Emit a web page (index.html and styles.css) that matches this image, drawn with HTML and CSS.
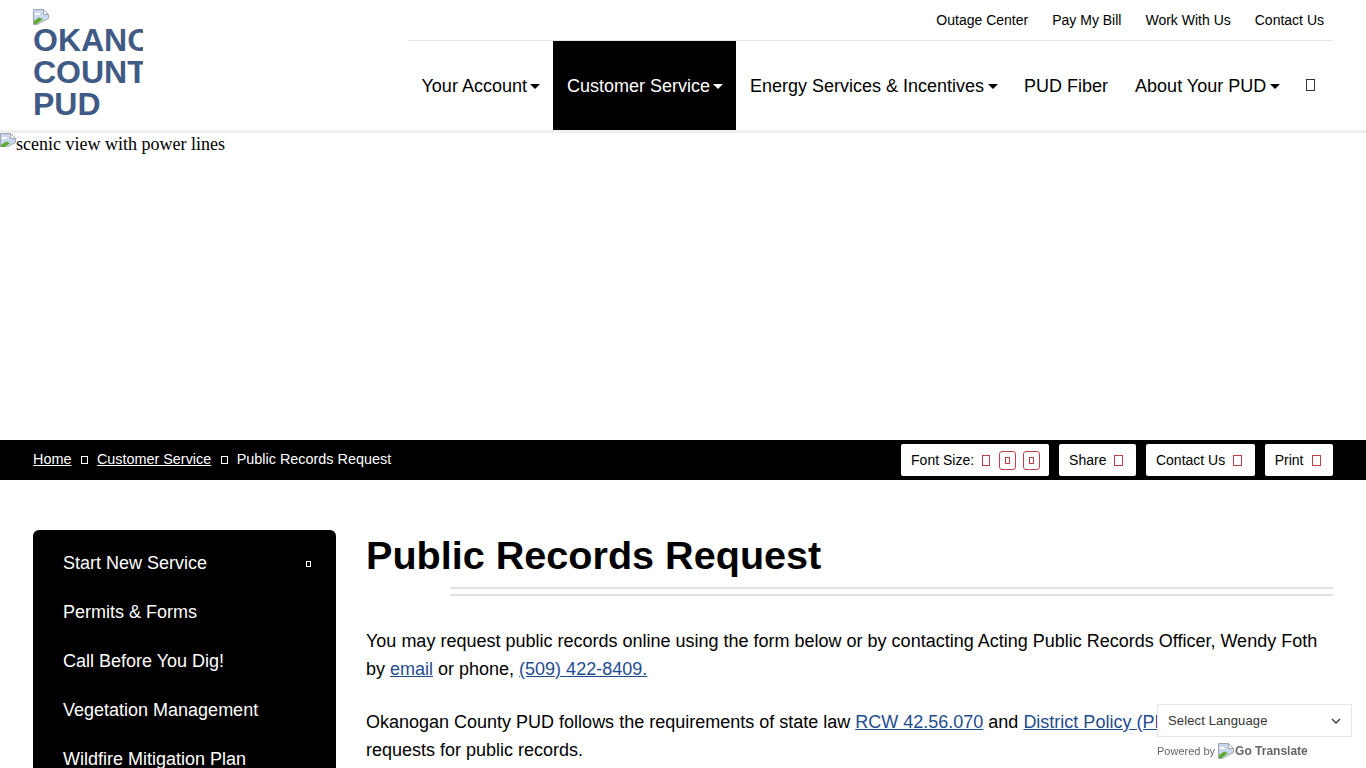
FILE: index.html
```html
<!DOCTYPE html>
<html lang="en">
<head>
<meta charset="utf-8">
<title>Public Records Request</title>
<link rel="stylesheet" href="styles.css">
</head>
<body>
<header class="site-header">
  <a class="logo" href="#">
    <svg class="broken" viewBox="0 0 16 16"><path d="M.5 15.500V.5h10l5 5v4L4 15.500z" fill="#c9d8ee" stroke="#a4a4ae"/><path d="M2 4h5v2H2z" fill="#fff"/><path d="M1 15v-3l5-3.500 4 1.500-6.500 5z" fill="#5fa82e"/><path d="M10.500.5v5h5z" fill="#fff" stroke="#a4a4ae"/></svg>
    <span class="logo-alt">OKANOGAN COUNTY PUD</span>
  </a>
  <div class="header-right">
    <nav class="top-links">
      <a href="#">Outage Center</a>
      <a href="#">Pay My Bill</a>
      <a href="#">Work With Us</a>
      <a href="#">Contact Us</a>
    </nav>
    <nav class="main-nav">
      <a href="#">Your Account<i class="caret"></i></a>
      <a href="#" class="active">Customer Service<i class="caret"></i></a>
      <a href="#">Energy Services &amp; Incentives<i class="caret"></i></a>
      <a href="#" class="plain">PUD Fiber</a>
      <a href="#">About Your PUD<i class="caret"></i></a>
      <a href="#" class="search"><i class="tofu tofu-dark"></i></a>
    </nav>
  </div>
</header>

<section class="hero">
  <svg class="broken broken-cut" viewBox="0 0 16 14"><path d="M.5 15.500V.5h10l5 5v4L4 15.500z" fill="#c9d8ee" stroke="#a4a4ae"/><path d="M2 4h5v2H2z" fill="#fff"/><path d="M1 15v-3l5-3.500 4 1.500-6.500 5z" fill="#5fa82e"/><path d="M10.500.5v5h5z" fill="#fff" stroke="#a4a4ae"/></svg><span>scenic view with power lines</span>
</section>

<div class="crumb-bar">
  <nav class="crumbs">
    <a href="#">Home</a><i class="tofu tofu-small"></i>
    <a href="#">Customer Service</a><i class="tofu tofu-small"></i>
    <span>Public Records Request</span>
  </nav>
  <div class="tools">
    <div class="chip chip-font">Font Size:
      <i class="tofu tofu-red first"></i>
      <i class="size-btn"><i class="tofu tofu-mini"></i></i>
      <i class="size-btn"><i class="tofu tofu-mini"></i></i>
    </div>
    <div class="chip">Share<i class="tofu tofu-red"></i></div>
    <div class="chip">Contact Us<i class="tofu tofu-red"></i></div>
    <div class="chip">Print<i class="tofu tofu-red"></i></div>
  </div>
</div>

<main class="layout">
  <aside class="side-menu">
    <a href="#">Start New Service<i class="tofu tofu-tiny"></i></a>
    <a href="#">Permits &amp; Forms</a>
    <a href="#">Call Before You Dig!</a>
    <a href="#">Vegetation Management</a>
    <a href="#">Wildfire Mitigation Plan</a>
  </aside>
  <article class="content">
    <h1>Public Records Request</h1>
    <div class="title-rule"></div>
    <p>You may request public records online using the form below or by contacting Acting Public Records Officer, Wendy Foth by <a href="#">email</a> or phone, <a href="#">(509) 422-8409.</a></p>
    <p>Okanogan County PUD follows the requirements of state law <a href="#">RCW 42.56.070</a> and <a href="#">District Policy (PDF)</a> for processing requests for public records.</p>
  </article>
</main>

<div class="translate">
  <div class="lang-select">Select Language
    <svg class="chev" viewBox="0 0 10 6"><path d="M1 1l4 4 4-4" fill="none" stroke="#444" stroke-width="1.500"/></svg>
  </div>
  <div class="powered">Powered by
    <svg class="broken" viewBox="0 0 16 16"><path d="M.5 15.500V.5h10l5 5v4L4 15.500z" fill="#c9d8ee" stroke="#a4a4ae"/><path d="M2 4h5v2H2z" fill="#fff"/><path d="M1 15v-3l5-3.500 4 1.500-6.500 5z" fill="#5fa82e"/><path d="M10.500.5v5h5z" fill="#fff" stroke="#a4a4ae"/></svg><span class="go">Go</span><b>Translate</b>
  </div>
</div>
</body>
</html>
```
FILE: styles.css
```css
* { box-sizing: border-box; }
html, body { margin: 0; padding: 0; }
body { font-family: "Liberation Sans", Arial, sans-serif; color: #000; background: #fff; overflow-x: hidden; }
a { color: inherit; text-decoration: none; }
i { font-style: normal; }

.broken { display: block; width: 16px; height: 16px; flex: none; }
.broken-cut { height: 14px; }

.site-header { display: flex; justify-content: space-between; height: 133px; padding: 0 33px; border-bottom: 3px solid #f0f0f0; }
.logo { display: block; width: 110px; padding-top: 9px; overflow: hidden; }
.logo-alt { display: block; width: 110px; margin-top: -1px; font: 700 32px/32px "Liberation Sans", sans-serif; color: #3f5a84; overflow: hidden; }

.header-right { width: 925px; display: flex; flex-direction: column; }
.top-links { height: 41px; display: flex; justify-content: flex-end; align-items: center; gap: 24px; padding-right: 9px; border-bottom: 1px solid #e5e5e5; font-size: 14px; }
.main-nav { display: flex; height: 90px; font-size: 18px; }
.main-nav a { display: flex; align-items: center; padding: 2px 13px 0 13.500px; }
.main-nav a.plain { padding-right: 13.500px; }
.main-nav a.active { background: #000; color: #fff; }
.main-nav a.search { padding: 0 0 0 13px; }
.caret { display: block; width: 0; height: 0; margin-left: 3.500px; border: 5px solid transparent; border-top-color: currentColor; border-bottom: 0; }

.tofu { display: inline-block; border: 1px solid currentColor; }
.tofu-dark { width: 9px; height: 12px; color: #333; }
.tofu-small { width: 7px; height: 8px; margin: 0 9px 0 9.500px; position: relative; top: 1px; }
.tofu-tiny { width: 5px; height: 6px; }
.tofu-red { width: 9px; height: 11px; margin-left: 8px; color: #bf3f4c; }
.tofu-red.first { width: 8px; }
.tofu-mini { width: 5px; height: 7px; }

.hero { height: 307px; display: flex; align-items: flex-start; font: 18px/22px "Liberation Serif", serif; }

.crumb-bar { height: 40px; background: #000; color: #fff; display: flex; justify-content: space-between; align-items: center; padding: 0 33px; }
.crumbs { font-size: 14.400px; display: flex; align-items: center; margin-top: -2px; }
.crumbs a { text-decoration: underline; }
.tools { display: flex; gap: 10px; }
.chip { height: 32px; background: #fff; color: #000; border-radius: 2px; display: flex; align-items: center; padding: 0 12.500px 0 10px; font-size: 14px; }
.chip-font { padding-right: 9px; }
.size-btn { width: 17px; height: 19px; margin-left: 7px; border: 1px solid #bf3f4c; border-radius: 3px; color: #bf3f4c; display: flex; align-items: center; justify-content: center; }
.tofu-red.first + .size-btn { margin-left: 9px; }

.layout { display: flex; gap: 30px; padding: 50px 33px 0; align-items: flex-start; }
.side-menu { width: 303px; flex: none; background: #000; color: #fff; border-radius: 6px; padding: 9.600px 0 10px; font-size: 18px; }
.side-menu a { display: flex; justify-content: space-between; align-items: center; height: 48.800px; padding: 0 25px 0 30px; }
.content { flex: 1; min-width: 0; }
h1 { margin: 0; font-size: 39.600px; line-height: 50px; font-weight: 700; }
.title-rule { height: 9px; margin: 7px 0 31px 84px; border-top: 2px solid #e2e2e2; border-bottom: 2px solid #e2e2e2; }
.content p { margin: 0 0 25px; font-size: 18px; line-height: 28px; }
.content p a { color: #1f4c8f; text-decoration: underline; }

.translate { position: fixed; left: 1157px; top: 704px; width: 195px; }
.lang-select { height: 33px; background: #fff; border: 1px solid #e6e6e6; display: flex; align-items: center; justify-content: space-between; padding: 0 10px; font-size: 13px; letter-spacing: .13px; color: #333; }
.chev { width: 10px; height: 6px; }
.powered { display: flex; align-items: center; height: 16px; margin-top: 6px; font-size: 11px; color: #666; gap: 3px; white-space: nowrap; }
.powered .go { width: 17px; overflow: hidden; font-size: 12px; font-weight: 700; margin-left: -2px; }
.powered b { font-size: 12px; }
```
